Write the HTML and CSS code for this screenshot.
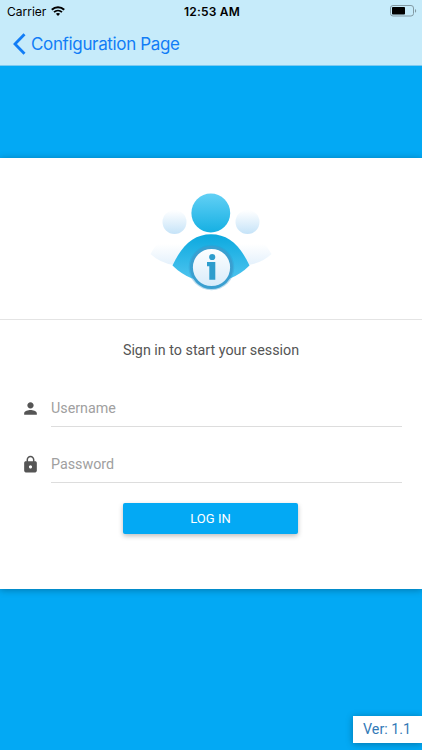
FILE: index.html
```html
<!DOCTYPE html>
<html lang="en">
<head>
  <meta charset="UTF-8">
  <meta name="viewport" content="width=device-width, initial-scale=1.0">
  <title>Sign In</title>
  <link rel="stylesheet" href="styles.css">
</head>
<body>
  <header class="top-bar">
    <div class="status-bar">
      <div class="carrier">
        <span>Carrier</span>
        <svg class="wifi" viewBox="0 0 14 10" width="14" height="10">
          <path d="M.8 3.8C4.2.4 9.8.4 13.200 3.800" fill="none" stroke="#000" stroke-width="2"/>
          <path d="M3 6.200c2.300-2.100 5.700-2.100 8 0" fill="none" stroke="#000" stroke-width="1.800"/>
          <path d="M4.900 7.800c1.200-1 3-1 4.200 0L7 9.900z"/>
        </svg>
      </div>
      <span class="clock">12:53 AM</span>
      <svg class="battery" viewBox="0 0 27 12" width="27" height="12">
        <rect x=".5" y=".5" width="23" height="10.500" rx="2.500" fill="none" stroke="#839aa4"/>
        <rect x="2" y="2" width="13" height="7.500" rx=".8"/>
        <path d="M25 4c1.600.6 1.600 3.200 0 3.800z" fill="#839aa4"/>
      </svg>
    </div>
    <a class="back-link" href="#">
      <svg viewBox="0 0 13 22" width="13" height="22">
        <path d="M11.500 1.200L2 11l9.500 9.800" fill="none" stroke="#117df6" stroke-width="2.800"/>
      </svg>
      <span>Configuration Page</span>
    </a>
  </header>

  <main class="card">
    <div class="logo">
      <svg viewBox="0 0 140 125" width="140" height="125">
        <defs>
          <linearGradient id="head" x1="0" y1="0" x2="0" y2="1">
            <stop offset="0" stop-color="#62d0f5"/>
            <stop offset="1" stop-color="#16b0e3"/>
          </linearGradient>
          <linearGradient id="torso" x1="0" y1="0" x2="0" y2="1">
            <stop offset="0" stop-color="#0ba9df"/>
            <stop offset="1" stop-color="#4cc3ee"/>
          </linearGradient>
          <linearGradient id="sideHead" x1="0" y1="0" x2="0" y2="1">
            <stop offset="0.05" stop-color="#fdfeff"/>
            <stop offset="1" stop-color="#c5e3f8"/>
          </linearGradient>
          <linearGradient id="sideBody" x1="0" y1="0" x2="0" y2="1">
            <stop offset="0.3" stop-color="#ffffff"/>
            <stop offset="1" stop-color="#e4f1fc"/>
          </linearGradient>
          <linearGradient id="badge" x1="0" y1="0" x2="0" y2="1">
            <stop offset="0" stop-color="#ffffff"/>
            <stop offset="1" stop-color="#d7ebfa"/>
          </linearGradient>
        </defs>
        <circle cx="34.5" cy="42" r="12" fill="url(#sideHead)"/>
        <circle cx="107.5" cy="42" r="12" fill="url(#sideHead)"/>
        <path d="M10.500 74Q21 55 36 55Q50 55 60 70L34 85Q20 83 10.500 74Z" fill="url(#sideBody)"/>
        <path d="M131.500 74Q121 55 106 55Q92 55 82 70L108 85Q122 83 131.500 74Z" fill="url(#sideBody)"/>
        <circle cx="70.8" cy="33" r="19.4" fill="url(#head)"/>
        <path d="M32.500 85.500C42 65 54 54.300 71 54.300S100 65 109.500 85.500Q101 94 90 98.500H52Q41 94 32.500 85.500Z" fill="url(#torso)"/>
        <circle cx="71.5" cy="87.5" r="22.8" fill="#3598cc" opacity=".35"/>
        <circle cx="71.5" cy="87.5" r="20" fill="url(#badge)" stroke="#3a9fd0" stroke-width="2.8"/>
        <circle cx="72.2" cy="77" r="3.1" fill="#2e9dcd"/>
        <path d="M67 82h8.300v17.800h-6V86.300H67z" fill="#2e9dcd"/>
      </svg>
    </div>
    <form class="login-form">
      <p class="message">Sign in to start your session</p>
      <div class="input-row">
        <svg viewBox="0 0 24 24" width="19" height="19">
          <path d="M12 12c2.210 0 4-1.790 4-4s-1.790-4-4-4-4 1.790-4 4 1.790 4 4 4zm0 2c-2.670 0-8 1.340-8 4v2h16v-2c0-2.660-5.330-4-8-4z"/>
        </svg>
        <input type="text" placeholder="Username" aria-label="Username">
      </div>
      <div class="input-row">
        <svg viewBox="0 0 24 24" width="19" height="19">
          <path d="M18 8h-1V6c0-2.760-2.240-5-5-5S7 3.240 7 6v2H6c-1.100 0-2 .9-2 2v10c0 1.100.9 2 2 2h12c1.100 0 2-.9 2-2V10c0-1.100-.9-2-2-2zm-6 9c-1.100 0-2-.9-2-2s.9-2 2-2 2 .9 2 2-.9 2-2 2zm3.100-9H8.900V6c0-1.710 1.390-3.100 3.100-3.100s3.100 1.390 3.100 3.100v2z"/>
        </svg>
        <input type="password" placeholder="Password" aria-label="Password">
      </div>
      <button class="login-button" type="button">LOG IN</button>
    </form>
  </main>

  <div class="version">Ver: 1.1</div>
</body>
</html>
```
FILE: styles.css
```css
* {
  box-sizing: border-box;
}
body {
  display: flex;
  flex-direction: column;
  height: 750px;
  margin: 0;
  overflow: hidden;
  background-color: #03a9f4;
  font-family: Roboto, sans-serif;
  color: #555;
}
.top-bar {
  height: 66px;
  background-color: #c6ebfa;
  border-bottom: 1px solid #7dcaf0;
  font-family: Inter, sans-serif;
}
.status-bar {
  display: grid;
  grid-template-columns: 1fr auto 1fr;
  align-items: center;
  height: 22px;
  padding: 0 5px 0 7px;
  font-size: 12px;
  color: #000;
}
.carrier {
  display: flex;
  align-items: center;
  gap: 5px;
}
.clock {
  letter-spacing: 0.2px;
  font-weight: 600;
}
.battery {
  justify-self: end;
}
.back-link {
  display: flex;
  align-items: center;
  gap: 5px;
  height: 43px;
  padding-left: 13px;
  font-size: 17px;
  letter-spacing: -0.35px;
  color: #117df6;
  text-decoration: none;
}
.card {
  height: 431px;
  margin-top: 92px;
  background-color: #fff;
  box-shadow: 0 1px 7px rgba(0, 0, 0, 0.3);
}
.logo {
  display: flex;
  justify-content: center;
  height: 162px;
  padding: 22px 2px 0 0;
  border-bottom: 1px solid #e4e4e4;
}
.login-form {
  display: flex;
  flex-direction: column;
  padding: 20px;
}
.message {
  margin: 0 0 39px;
  font-size: 14.3px;
  line-height: 20px;
  text-align: center;
}
.input-row {
  display: grid;
  grid-template-columns: 20px 1fr;
  align-items: start;
  justify-items: center;
  gap: 11px;
  height: 28px;
  margin-bottom: 28px;
}
.input-row svg {
  fill: #555;
}
.input-row input {
  width: 100%;
  height: 28px;
  padding: 0 0 10px;
  border: 0;
  border-bottom: 1px solid #ddd;
  background: none;
  font-family: inherit;
  font-size: 14.3px;
  outline: none;
}
.input-row input::placeholder {
  color: #a0a0a0;
}
.login-button {
  align-self: center;
  width: 175px;
  height: 31px;
  margin: -8px 1px 0 0;
  border: 0;
  border-radius: 2px;
  background-color: #03a9f4;
  box-shadow: 0 2px 5px rgba(0, 0, 0, 0.26);
  font-family: inherit;
  font-size: 13px;
  color: #fff;
}
.version {
  align-self: flex-end;
  width: 69px;
  height: 27px;
  margin: auto 0 7px;
  padding-left: 10px;
  background-color: #fff;
  box-shadow: 0 1px 7px rgba(0, 0, 0, 0.3);
  font-size: 14.3px;
  line-height: 26px;
  color: #337ab7;
}
```
